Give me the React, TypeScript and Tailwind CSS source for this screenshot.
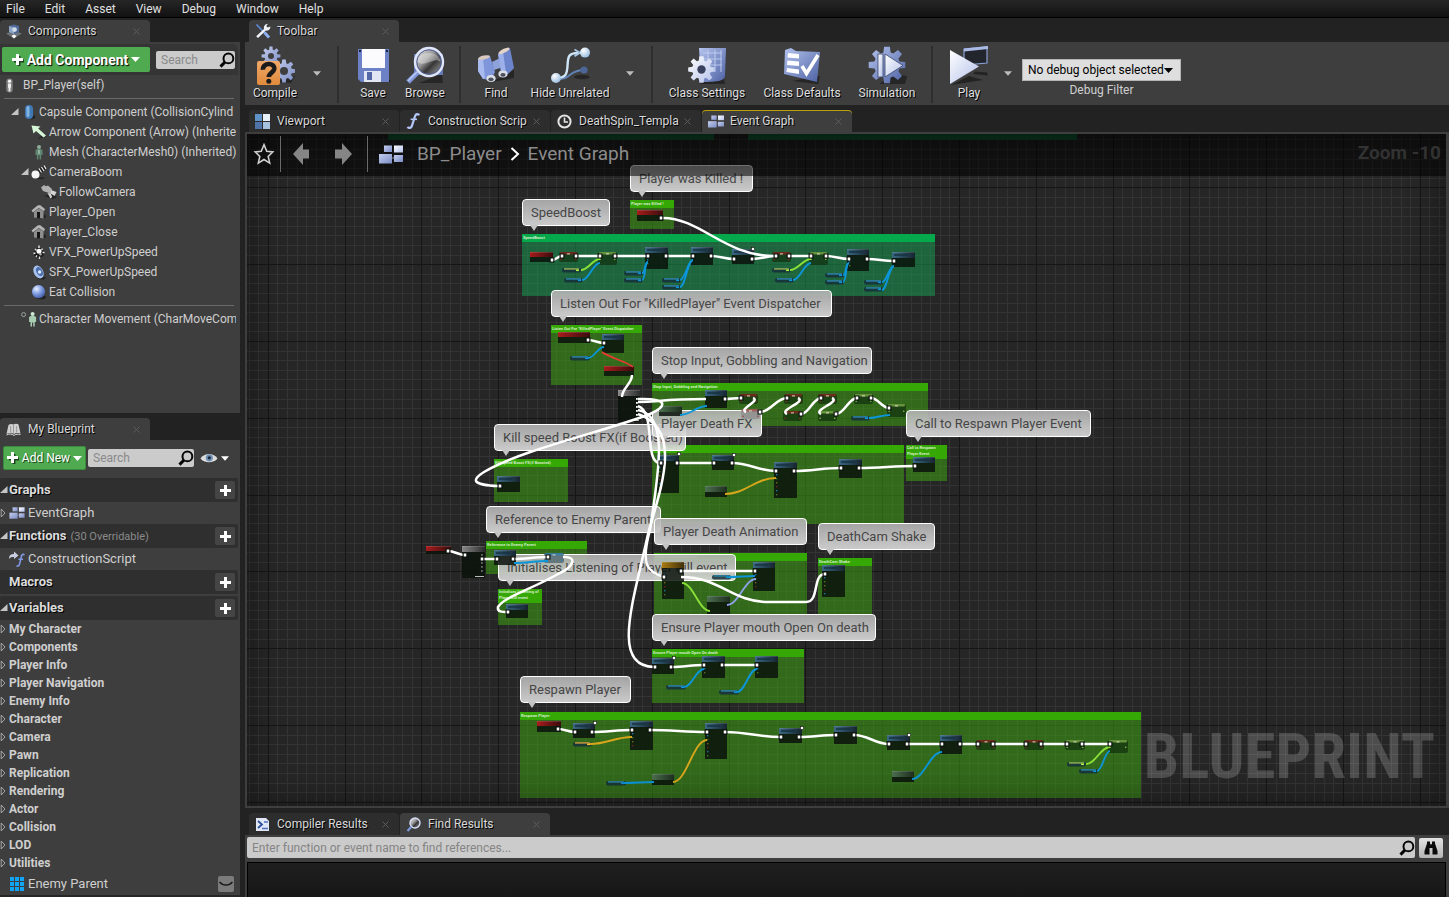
import React from "react";

/* ---------- shared shapes ---------- */

function gearPath(cx: number, cy: number, rOuter: number, rInner: number, teeth: number) {
  const step = (Math.PI * 2) / teeth;
  const pts: string[] = [];
  for (let i = 0; i < teeth; i++) {
    const a = i * step - Math.PI / 2;
    const spots: [number, number][] = [
      [a - step * 0.36, rInner],
      [a - step * 0.2, rOuter],
      [a + step * 0.2, rOuter],
      [a + step * 0.36, rInner],
    ];
    spots.forEach(([ang, r]) => pts.push(`${(cx + Math.cos(ang) * r).toFixed(1)} ${(cy + Math.sin(ang) * r).toFixed(1)}`));
  }
  return `M${pts.join("L")}Z`;
}

function Gradients() {
  return (
    <svg width="0" height="0" className="absolute" aria-hidden="true">
      <defs>
        <linearGradient id="steel" x1="0" y1="0" x2="1" y2="1">
          <stop offset="0" stopColor="#b4c3ee" />
          <stop offset="1" stopColor="#4d62a4" />
        </linearGradient>
        <linearGradient id="cog" x1="0" y1="0" x2="1" y2="1">
          <stop offset="0" stopColor="#c3cdef" />
          <stop offset="1" stopColor="#7d8dc4" />
        </linearGradient>
        <linearGradient id="pale" x1="0" y1="0" x2="1" y2="1">
          <stop offset="0" stopColor="#ffffff" />
          <stop offset="1" stopColor="#b3c0ea" />
        </linearGradient>
        <linearGradient id="orange" x1="0" y1="0" x2="0" y2="1">
          <stop offset="0" stopColor="#f0a868" />
          <stop offset="1" stopColor="#e08a3c" />
        </linearGradient>
        <linearGradient id="lens" x1="0" y1="0" x2="1" y2="1">
          <stop offset="0" stopColor="#f4f4f4" />
          <stop offset="0.4" stopColor="#9a9a9a" />
          <stop offset="0.6" stopColor="#363636" />
          <stop offset="1" stopColor="#b8b8b8" />
        </linearGradient>
        <radialGradient id="ball" cx="0.35" cy="0.3" r="0.8">
          <stop offset="0" stopColor="#e8f0ff" />
          <stop offset="0.5" stopColor="#7b98e0" />
          <stop offset="1" stopColor="#3b549e" />
        </radialGradient>
        <radialGradient id="whiteBall" cx="0.35" cy="0.3" r="0.8">
          <stop offset="0" stopColor="#ffffff" />
          <stop offset="1" stopColor="#8fb6dc" />
        </radialGradient>
      </defs>
    </svg>
  );
}

type IconProps = { className?: string };

const Svg = ({ box, className, children }: { box: string; className?: string; children: React.ReactNode }) => (
  <svg viewBox={box} className={className} aria-hidden="true">
    {children}
  </svg>
);

const Magnifier = ({ className }: IconProps) => (
  <Svg box="0 0 16 16" className={className}>
    <circle cx="9.4" cy="6.4" r="4.9" fill="none" stroke="#050505" strokeWidth="2" />
    <path d="M6 10L1.5 14.6" stroke="#050505" strokeWidth="3" />
  </Svg>
);

const Caret = ({ className }: IconProps) => (
  <Svg box="0 0 9 5" className={className}>
    <path d="M0 0H9L4.5 5Z" fill="currentColor" />
  </Svg>
);

const Plus = ({ className }: IconProps) => (
  <Svg box="0 0 12 12" className={className}>
    <path d="M2 7h10M7 2v10" stroke="#000" strokeWidth="3" opacity="0.6" />
    <path d="M0 5.5h11M5.5 0v11" stroke="#fff" strokeWidth="3" />
  </Svg>
);

const Open = () => (
  <Svg box="0 0 8 8" className="h-2 w-2">
    <path d="M7.5 0V7H0Z" fill="#c4c4c4" />
  </Svg>
);

const Closed = () => (
  <Svg box="0 0 6 10" className="h-2.5 w-1.5">
    <path d="M1.2 1L5 5L1.2 9Z" fill="none" stroke="#b0b0b0" strokeWidth="0.9" />
  </Svg>
);

/* ---------- small icons ---------- */

const GraphIcon = ({ className }: IconProps) => (
  <Svg box="0 0 24 19" className={className}>
    <path d="M12 4H8M12 13h4" stroke="#8890a8" strokeWidth="1" />
    <rect x="5" y="0.5" width="8" height="6.5" fill="url(#cog)" />
    <rect x="15" y="0.5" width="9" height="7" fill="url(#pale)" />
    <rect x="0" y="9" width="13" height="9.5" fill="url(#cog)" />
    <rect x="15" y="10" width="9" height="7" fill="url(#cog)" />
  </Svg>
);

const ViewportIcon = ({ className }: IconProps) => (
  <Svg box="0 0 15 15" className={className}>
    <rect x="0" y="0" width="7" height="7" fill="#5f93c8" />
    <rect x="8" y="0" width="7" height="7" fill="#e9f2f8" />
    <rect x="0" y="8" width="7" height="7" fill="#4f74a8" />
    <rect x="8" y="8" width="7" height="7" fill="#a5c3de" />
  </Svg>
);

const FunctionIcon = ({ className }: IconProps) => (
  <Svg box="0 0 14 16" className={className}>
    <path d="M13 2.3C12.4.6 9.8.6 9 3.2L6 12.6C5.3 15.2 3 15.6 1.4 14" fill="none" stroke="#b5c6f8" strokeWidth="2.2" />
    <path d="M4.6 6.3H11" stroke="#b5c6f8" strokeWidth="1.6" />
  </Svg>
);

const ConstructIcon = ({ className }: IconProps) => (
  <Svg box="0 0 16 16" className={className}>
    <path d="M0 8C0 4 2 3 5 3V.5L9.5 4.5L5 8V6C3 6 1.5 6 0 8Z" fill="#c8cde0" />
    <path d="M15.3 4.3C14.8 3 13 3 12.5 5L10.6 12.8C10.2 15 8.6 15.6 7.6 14.6M9.4 8.3H14" fill="none" stroke="#7f97e4" strokeWidth="1.6" />
  </Svg>
);

const ClockIcon = ({ className }: IconProps) => (
  <Svg box="0 0 15 15" className={className}>
    <circle cx="7.5" cy="7.5" r="6.1" fill="none" stroke="#e4e4e4" strokeWidth="2" />
    <path d="M7.5 3.6V8H11" fill="none" stroke="#e4e4e4" strokeWidth="1.6" />
  </Svg>
);

const ToolsIcon = ({ className }: IconProps) => (
  <Svg box="0 0 16 16" className={className}>
    <path d="M1.5 1.5L14 14.5" stroke="#5d86d8" strokeWidth="1.8" />
    <path d="M9.5 9.5L14 14.5" stroke="#8fb0f0" strokeWidth="3" />
    <path d="M1.2 13.2L9 6C8.4 3.4 10 1 13 .8L11.3 3L12.6 4.6L15.4 3.6C15.6 6.2 13.4 8.2 10.8 7.6L3 15Z" fill="#f2f4fa" />
  </Svg>
);

const ComponentsIcon = ({ className }: IconProps) => (
  <Svg box="0 0 16 15" className={className}>
    <path d="M0 9.5L8 6.5L16 9.5L8 14.5Z" fill="#6d7178" />
    <path d="M3 2L8 .5L13 2V8L8 10L3 8Z" fill="#4f6a98" />
    <path d="M3 2L8 3.5V10L3 8Z" fill="#8fa5c8" />
    <circle cx="8.6" cy="5.6" r="2.3" fill="#d3dcea" />
    <path d="M5.5 12L8 10.5L10.5 12L8 14.5Z" fill="#fff" />
  </Svg>
);

const BlueprintTabIcon = ({ className }: IconProps) => (
  <Svg box="0 0 15 13" className={className}>
    <path d="M2.5 2C4 .8 6 .8 7.5 1.6C9 .6 11 .6 12.500 1.6L14.5 10.5C12 9.8 9.500 9.8 8 11C6 9.8 3 9.8.5 11Z" fill="#cfcfcf" />
    <path d="M7.5 2V10.5M4.600 3v6.500M10.600 3v6.500" stroke="#8b8b8b" strokeWidth="0.8" />
    <path d="M.5 12C3 10.500 6 11 8 12.400C10 11 12 11 14.5 11.500" stroke="#fff" fill="none" strokeWidth="0.8" />
  </Svg>
);

const ResultsIcon = ({ className }: IconProps) => (
  <Svg box="0 0 15 15" className={className}>
    <path d="M1 1H11L14 4V14H1Z" fill="#dfe6f5" />
    <path d="M3 4l4 3.5L3 11" fill="none" stroke="#2a4f98" strokeWidth="1.8" />
    <path d="M7 11.5h6M9 5h4" stroke="#4d71ba" strokeWidth="1.6" />
  </Svg>
);

const FindIcon = ({ className }: IconProps) => (
  <Svg box="0 0 15 15" className={className}>
    <circle cx="9" cy="6" r="5" fill="url(#lens)" stroke="#d5def5" strokeWidth="1.4" />
    <path d="M5.4 9.8L1.5 14" stroke="#7d99dc" strokeWidth="2.2" />
  </Svg>
);

const EyeIcon = ({ className }: IconProps) => (
  <Svg box="0 0 18 12" className={className}>
    <path d="M.5 6.5C4 .5 14 .5 17.5 6.5C14 11.5 4 11.5 .5 6.5Z" fill="#dcdcdc" />
    <circle cx="9.3" cy="5.8" r="3.6" fill="#6f8fb4" />
    <circle cx="9.3" cy="5.8" r="1.6" fill="#1c2a3c" />
  </Svg>
);

const figure = "M6.3 5h3.4l1.8 1v5h-1.4v4.5H8.6V11.5H7.4v4H5.9V11H4.5V6Z";

const treeIcons: Record<string, React.ReactNode> = {
  actor: (
    <g>
      <rect x="4.5" y="0.5" width="7" height="15" rx="3.5" fill="#7c7c7c" />
      <circle cx="8" cy="3.4" r="1.8" fill="#f2f2f2" />
      <path d="M6.400 5.800H9.600V10.500H9V14.500H7V10.500H6.400Z" fill="#ededed" />
    </g>
  ),
  capsule: (
    <g>
      <path d="M9 14l5-3v3l-4 1.6Z" fill="#222" />
      <rect x="4" y="1" width="8" height="14" rx="4" fill="#4078b4" />
      <rect x="5.5" y="2" width="3" height="11" rx="1.5" fill="#7fb4e2" />
    </g>
  ),
  arrow: (
    <g>
      <path d="M6 15l9-2-2-3Z" fill="#242424" />
      <path d="M0.500 1.5L9.500 2.400L7.200 4.600L15 11.400L12.600 13.600L5 6.900L2.500 9.600Z" fill="#d6f6d8" />
    </g>
  ),
  mesh: (
    <g>
      <circle cx="8" cy="3" r="2" fill="#8fae9b" />
      <path d={figure} fill="#5f8570" />
      <path d="M7.5 6h1v4h-1z" fill="#c6dccb" />
    </g>
  ),
  boom: (
    <g>
      <path d="M7.500 8.500L13.500 3.500" stroke="#1c1c1c" strokeWidth="4" />
      <path d="M8 4.500l2.500 4M10.500 3l2.500 4M13 1.500l2 3.500" stroke="#ececec" strokeWidth="1.2" />
      <circle cx="4.500" cy="10.5" r="4" fill="#f6f6f6" />
      <path d="M5 15h7l2-1.5H9Z" fill="#222" />
    </g>
  ),
  camera: (
    <g>
      <path d="M3 12l9 3 4-2-5-3Z" fill="#242424" />
      <path d="M0 3.500L3 1L5 2.200L7 1.500L11 5L9.500 9.500L2 7Z" fill="#b0b0b0" />
      <path d="M10 6L15.500 8L13.500 12L9.500 9.500ZM6.500 9L9.500 14.500L11.200 13L9.600 9.500Z" fill="#d4d4d4" />
    </g>
  ),
  house: (
    <g>
      <path d="M8 15l7-1.5-1-3.5Z" fill="#202020" />
      <path d="M0.500 6.600L6.500 1.400L9 1L14 5L13 7.300L7.600 4L2 8.600Z" fill="#b4b4b4" />
      <path d="M3 8L7.5 4.600L12.500 7V14.500L3 13.600Z" fill="#8d8d8d" />
      <path d="M6 8H9V14.200H6Z" fill="#161616" />
    </g>
  ),
  spark: (
    <g>
      <circle cx="8" cy="9" r="5" fill="#191919" />
      <path d="M8 1.500v2.500M2.500 9.500l2-.5M8.500 12.500v2.500M11.500 8.500h2M4 5l1.600 1.600M11.600 4.600L10.500 6M5 13l1-1.600" stroke="#e4e4e4" strokeWidth="1.4" />
      <circle cx="8" cy="7.200" r="2.500" fill="#fff" />
      <circle cx="9.500" cy="10.200" r="1.200" fill="#a8a8a8" />
    </g>
  ),
  speaker: (
    <g>
      <path d="M6 13l9 0-2 2.4H8Z" fill="#222" />
      <ellipse cx="7.500" cy="8" rx="4.6" ry="6.8" fill="#a9c4f0" transform="rotate(-28 7.5 8)" />
      <ellipse cx="8.500" cy="7.6" rx="3" ry="4.8" fill="#4d6fb0" transform="rotate(-28 8.5 7.6)" />
      <circle cx="8.600" cy="8" r="1.7" fill="#dceaff" />
    </g>
  ),
  sphere: (
    <g>
      <ellipse cx="10" cy="13.4" rx="5" ry="1.8" fill="#222" />
      <circle cx="7.500" cy="7.6" r="6.6" fill="url(#ball)" />
    </g>
  ),
  movement: (
    <g>
      <circle cx="2.6" cy="3.6" r="2" fill="none" stroke="#9aa89c" strokeWidth="1" />
      <circle cx="11.6" cy="3" r="2" fill="#cfe8d4" />
      <path d={figure} fill="#a9cdb2" transform="translate(3.6 0)" />
    </g>
  ),
};

/* ---------- toolbar icons ---------- */

const CompileIcon = () => (
  <Svg box="0 0 40 40" className="h-10 w-10">
    <path d="M20 36L36 37L40 30Z" fill="#262626" />
    <path d={gearPath(16, 10, 9.5, 6.6, 8)} fill="url(#cog)" />
    <circle cx="16" cy="10" r="3" fill="#3e3e3e" />
    <path d={gearPath(29, 25, 11.5, 8, 8)} fill="url(#cog)" />
    <circle cx="29" cy="25" r="4" fill="#3e3e3e" />
    <rect x="2" y="15" width="23" height="24" rx="2" fill="url(#orange)" />
    <path d="M8 23.800C7.400 16.200 20.200 16.200 19.200 23.200C18.600 26.800 14 26.600 13.800 31" fill="none" stroke="#1b1b1b" strokeWidth="4.600" />
    <circle cx="13.8" cy="35.200" r="2.5" fill="#1b1b1b" />
  </Svg>
);

const SaveIcon = () => (
  <Svg box="0 0 40 40" className="h-10 w-10">
    <path d="M8 36L38 36L34 30Z" fill="#262626" />
    <path d="M5 3H36V36H8L5 33Z" fill="#6d82c6" />
    <rect x="9" y="3" width="23" height="19" fill="#fbfbfd" />
    <rect x="11" y="25" width="17" height="11" fill="#e3e7f4" />
    <rect x="14" y="26" width="5" height="8" fill="#5468a8" />
    <path d="M6 5h2M33 5h2" stroke="#1c2340" strokeWidth="2" />
  </Svg>
);

const BrowseIcon = () => (
  <Svg box="0 0 40 40" className="h-10 w-10">
    <path d="M14 37L38 37L37 28Z" fill="#262626" />
    <path d="M9 8H38V29H9Z" fill="#6478b8" />
    <path d="M13 26L3 36" stroke="#7f95d8" strokeWidth="5" />
    <path d="M12 26L3 35" stroke="#b9c8f5" strokeWidth="1.6" />
    <circle cx="24" cy="16" r="14" fill="url(#lens)" stroke="#dfe6fa" strokeWidth="2.4" />
    <circle cx="24" cy="16" r="12.2" fill="none" stroke="#4f5f94" strokeWidth="1" />
    <path d="M12.500 16C13 4 35 4 35.500 16C30 10 20 22 12.500 16Z" fill="#fff" opacity="0.35" />
  </Svg>
);

const BinocularIcon = () => (
  <Svg box="0 0 40 40" className="h-10 w-10">
    <path d="M16 36L38 32L38 24Z" fill="#262626" />
    <path d="M2 13L14 10L19 26L15 34L7 33L2 25Z" fill="#7f96da" />
    <path d="M2 13L7 12L9 32L7 33L2 25Z" fill="#a9baee" />
    <path d="M22 8L34 2L38 22L32 28L25 26Z" fill="#6c84cc" />
    <path d="M22 8L27 5.500L30 27L25 26Z" fill="#9db0ea" />
    <path d="M16 16L24 12V22L18 24Z" fill="#8ea2dc" />
    <ellipse cx="8" cy="11.500" rx="6" ry="2" fill="#d8c8c0" transform="rotate(-12 8 11.500)" />
    <ellipse cx="28" cy="4.800" rx="6" ry="2" fill="#e4d4c8" transform="rotate(-26 28 4.8)" />
    <ellipse cx="15" cy="32.500" rx="4.600" ry="3.400" fill="#dadde6" />
    <ellipse cx="15" cy="33.300" rx="2.6" ry="1.900" fill="#4b4f5c" />
    <ellipse cx="27" cy="28" rx="4.600" ry="3.400" fill="#dadde6" />
    <ellipse cx="27" cy="28.800" rx="2.6" ry="1.900" fill="#4b4f5c" />
  </Svg>
);

const HideIcon = () => (
  <Svg box="0 0 40 40" className="h-10 w-10">
    <ellipse cx="32" cy="31" rx="8" ry="2.2" fill="#262626" />
    <path d="M6 33C22 34 18 24 34 24" fill="none" stroke="#5f82b4" strokeWidth="2" />
    <circle cx="34" cy="24" r="3.6" fill="#4c6698" />
    <path d="M6 32C16 32 17 28 17.500 20C18 11 18 7 28 7" fill="none" stroke="#cfe6f8" strokeWidth="2.400" />
    <path d="M24.500 3.400L30 6.800L24.500 10.200" fill="none" stroke="#a9c9e8" strokeWidth="1.800" />
    <circle cx="35" cy="6.6" r="5" fill="url(#whiteBall)" />
    <circle cx="6" cy="32" r="5" fill="url(#whiteBall)" />
  </Svg>
);

const SettingsIcon = () => (
  <Svg box="0 0 40 40" className="h-10 w-10">
    <path d="M12 38L38 38L36 28Z" fill="#262626" />
    <path d="M12 2L39 2L38 29C38 35 32 36 14 36Z" fill="url(#steel)" />
    <path d="M16 7H35M16 13H35M16 19H35M21 4V26M28 4V26M34 4V26" stroke="#c9d5f6" strokeWidth="1.1" opacity="0.8" />
    <path d={gearPath(14.500, 23.500, 13.5, 9.500, 8)} fill="url(#pale)" />
    <circle cx="14.500" cy="23.500" r="4.2" fill="#39415e" />
  </Svg>
);

const DefaultsIcon = () => (
  <Svg box="0 0 40 40" className="h-10 w-10">
    <path d="M10 35L36 38L38 30Z" fill="#262626" />
    <path d="M3 4L9 2L14 5L38 6L35 36L2 28Z" fill="url(#steel)" />
    <path d="M6 7L17 8V12.5L5.4 11.5ZM5.4 14.5L17 15.5V20L5 19ZM5 22L17 23.5V28L4.4 26Z" fill="#fdfdff" />
    <path d="M20 20L24.500 27.500L36 9" fill="none" stroke="#fff" strokeWidth="3.6" />
  </Svg>
);

const SimulationIcon = () => (
  <Svg box="0 0 40 40" className="h-10 w-10">
    <path d="M12 38L38 38L40 30L28 28Z" fill="#262626" />
    <path d={gearPath(20, 19, 18.500, 13, 8)} fill="url(#steel)" />
    <rect x="11" y="8" width="5" height="23" fill="url(#pale)" stroke="#3a4568" strokeWidth="0.8" />
    <path d="M18 8L36 19.5L18 31Z" fill="url(#pale)" stroke="#3a4568" strokeWidth="0.8" />
  </Svg>
);

const PlayIcon = () => (
  <Svg box="0 0 40 40" className="h-10 w-10">
    <path d="M2 39L34 34L20 30ZM24 28L39 29.500L38 26.500L26 25.500Z" fill="#232323" />
    <path d="M15 3L38 1V17L15 19Z" fill="#23252d" stroke="#8ba0d4" strokeWidth="1.2" />
    <path d="M15 2.5L39 0V3L15 5.500Z" fill="#a9bbe6" />
    <path d="M1 4L30 20.500L1 38Z" fill="url(#pale)" />
  </Svg>
);

/* ---------- tabs ---------- */

function Tab({ icon, label, active, accent }: { icon: React.ReactNode; label: string; active?: boolean; accent?: boolean }) {
  return (
    <div
      className={`flex h-[22px] w-[150px] items-center rounded-t-sm pr-2.5 pl-1.5 ${active ? "bg-[#3e3e3e]" : "bg-[#2d2d2d]"} ${accent ? "shadow-[inset_0_1px_0_#b8a010]" : ""}`}
    >
      <span className="flex w-[22px] shrink-0 items-center">{icon}</span>
      <button type="button" className="min-w-0 flex-1 text-left whitespace-nowrap text-[#d8d8d8] [text-shadow:1px_1px_0_#000]">
        {label}
      </button>
      <button type="button" aria-label={`Close ${label}`} className="shrink-0">
        <Svg box="0 0 7 7" className="h-[7px] w-[7px]">
          <path d="M0.5 0.5L6.5 6.5M6.5 0.5L0.5 6.5" stroke="#5c5c5c" strokeWidth="1" />
        </Svg>
      </button>
    </div>
  );
}

/* ---------- left column ---------- */

const components: { icon: string; label: string; indent: string; open?: boolean }[] = [
  { icon: "capsule", label: "Capsule Component (CollisionCylind", indent: "pl-[11px]", open: true },
  { icon: "arrow", label: "Arrow Component (Arrow) (Inherite", indent: "pl-[21px]" },
  { icon: "mesh", label: "Mesh (CharacterMesh0) (Inherited)", indent: "pl-[21px]" },
  { icon: "boom", label: "CameraBoom", indent: "pl-[21px]", open: true },
  { icon: "camera", label: "FollowCamera", indent: "pl-[31px]" },
  { icon: "house", label: "Player_Open", indent: "pl-[21px]" },
  { icon: "house", label: "Player_Close", indent: "pl-[21px]" },
  { icon: "spark", label: "VFX_PowerUpSpeed", indent: "pl-[21px]" },
  { icon: "speaker", label: "SFX_PowerUpSpeed", indent: "pl-[21px]" },
  { icon: "sphere", label: "Eat Collision", indent: "pl-[21px]" },
];

function TreeRow({ icon, label, indent, open }: { icon: string; label: string; indent: string; open?: boolean }) {
  return (
    <li className={`flex h-5 items-center overflow-hidden whitespace-nowrap ${indent}`}>
      <span className="w-2.5 shrink-0">{open && <Open />}</span>
      <Svg box="0 0 16 16" className="mr-0.5 h-4 w-4 shrink-0">
        {treeIcons[icon]}
      </Svg>
      <span>{label}</span>
    </li>
  );
}

function SearchBox({ id, className }: { id: string; className: string }) {
  return (
    <div className={`flex h-[18px] items-center rounded-xs bg-[#cbcbcb] ${className}`}>
      <input
        id={id}
        aria-label="Search"
        placeholder="Search"
        className="w-full min-w-0 flex-1 bg-transparent pl-[5px] outline-none placeholder:text-[#8a8a8a]"
      />
      <Magnifier className="h-4 w-4 shrink-0" />
    </div>
  );
}

function ComponentsPanel() {
  return (
    <section>
      <div className="flex pt-0.5">
        <Tab icon={<ComponentsIcon className="h-[15px] w-4" />} label="Components" active />
      </div>
      <div className="h-[371px] bg-[#3e3e3e] pt-0.5 pr-0.5">
        <div className="flex h-[31px] items-center gap-1.5 rounded-tr-md bg-[#353535] pl-0.5">
          <button
            type="button"
            className="flex h-[25px] w-[148px] items-center justify-center gap-[3px] rounded-xs bg-[#4faa50] text-[14px] font-bold text-white [text-shadow:1px_1px_1px_#000]"
          >
            <Plus className="h-3 w-3" />
            <span className="whitespace-nowrap">Add Component</span>
            <Caret className="h-[5px] w-[9px]" />
          </button>
          <SearchBox id="component-search" className="w-[79px]" />
        </div>
        <div className="flex h-5 items-center gap-1.5 pl-0.5">
          <Svg box="0 0 16 16" className="h-[15px] w-[15px]">
            {treeIcons.actor}
          </Svg>
          <span>BP_Player(self)</span>
        </div>
        <hr className="mx-1 mt-[3px] mb-[3px] border-[#6a6a6a]" />
        <ul className="pr-px">
          {components.map((c) => (
            <TreeRow key={c.label} {...c} />
          ))}
        </ul>
        <hr className="mx-1 mt-[3px] mb-[3px] border-[#6a6a6a]" />
        <ul className="pr-0.5">
          <TreeRow icon="movement" label="Character Movement (CharMoveCom" indent="pl-[11px]" />
        </ul>
      </div>
    </section>
  );
}

function Category({ label, note, open = true, gap }: { label: string; note?: string; open?: boolean; gap?: boolean }) {
  return (
    <div className={`flex h-6 items-center rounded-xs bg-[#2f2f2f] pr-[3px] ${gap ? "mt-0.5" : ""}`}>
      <span className="w-[9px] shrink-0">{open && <Open />}</span>
      <h2 className="text-[13px] font-bold text-[#dcdcdc] [text-shadow:1px_1px_0_#000]">{label}</h2>
      {note && <span className="pt-0.5 pl-1 text-[11px] text-[#8a8a8a]">{note}</span>}
      <button type="button" aria-label={`Add to ${label}`} className="ml-auto flex h-[18px] w-5 items-center justify-center rounded-xs bg-[#454545]">
        <Svg box="0 0 11 11" className="h-[11px] w-[11px]">
          <path d="M0 5.5h11M5.5 0v11" stroke="#fff" strokeWidth="3" />
        </Svg>
      </button>
    </div>
  );
}

const variableGroups = [
  "My Character",
  "Components",
  "Player Info",
  "Player Navigation",
  "Enemy Info",
  "Character",
  "Camera",
  "Pawn",
  "Replication",
  "Rendering",
  "Actor",
  "Collision",
  "LOD",
  "Utilities",
];

function BlueprintPanel() {
  return (
    <section className="flex flex-1 flex-col">
      <div className="flex pt-[5px]">
        <Tab icon={<BlueprintTabIcon className="h-[13px] w-[15px]" />} label="My Blueprint" active />
      </div>
      <div className="flex-1 bg-[#3e3e3e] pr-0.5">
        <div className="flex h-[38px] items-center gap-0.5 pb-0.5 pl-[3px]">
          <button
            type="button"
            className="flex h-6 w-[83px] items-center justify-center gap-[3px] rounded-xs border border-[#3a8c3c] bg-[#4faa50] text-white [text-shadow:1px_1px_0_#1e4a1e]"
          >
            <Plus className="h-3 w-3" />
            <span className="whitespace-nowrap">Add New</span>
            <Caret className="h-[5px] w-[9px]" />
          </button>
          <SearchBox id="blueprint-search" className="w-[106px]" />
          <button type="button" aria-label="View options" className="ml-1 flex items-center gap-[3px] text-white">
            <EyeIcon className="h-3 w-[18px]" />
            <Caret className="h-[5px] w-2" />
          </button>
        </div>
        <Category label="Graphs" />
        <div className="flex h-[22px] items-center text-[13px]">
          <span className="w-[9px]">
            <Closed />
          </span>
          <GraphIcon className="mr-[3px] h-3 w-4" />
          EventGraph
        </div>
        <Category label="Functions" note="(30 Overridable)" />
        <div className="flex h-[22px] items-center pl-[9px] text-[13px]">
          <ConstructIcon className="mr-[3px] h-4 w-4" />
          ConstructionScript
        </div>
        <Category label="Macros" open={false} />
        <Category label="Variables" gap />
        <ul>
          {variableGroups.map((g) => (
            <li key={g} className="flex h-[18px] items-center font-bold">
              <span className="w-[9px]">
                <Closed />
              </span>
              {g}
            </li>
          ))}
        </ul>
        <div className="flex h-[23px] items-center pr-1 pl-2.5 text-[13px]">
          <Svg box="0 0 14 14" className="mr-1 h-3.5 w-3.5">
            <path d="M0 0h4v4H0zM5 0h4v4H5zM10 0h4v4h-4zM0 5h4v4H0zM5 5h4v4H5zM10 5h4v4h-4zM0 10h4v4H0zM5 10h4v4H5zM10 10h4v4h-4z" fill="#10a5f5" />
          </Svg>
          Enemy Parent
          <button type="button" aria-label="Toggle visibility" className="ml-auto flex h-4 w-4 items-center justify-center rounded-xs bg-[#7b7b7b]">
            <Svg box="0 0 14 8" className="h-2 w-3.5">
              <path d="M.5 2C4 6 10 6 13.5 2" fill="none" stroke="#1a1a1a" strokeWidth="1.5" />
            </Svg>
          </button>
        </div>
      </div>
      <div className="h-0.5 bg-[#262626]" />
    </section>
  );
}

/* ---------- toolbar ---------- */

function Tool({ icon, label, width }: { icon: React.ReactNode; label: string; width: string }) {
  return (
    <button type="button" className={`flex shrink-0 flex-col items-center ${width}`}>
      {icon}
      <span className="leading-[14px] whitespace-nowrap text-[#dedede] [text-shadow:1px_1px_0_#000]">{label}</span>
    </button>
  );
}

const ToolMenu = ({ label, width }: { label: string; width: string }) => (
  <button type="button" aria-label={label} className={`flex shrink-0 items-center justify-center pb-1 text-[#bdbdbd] ${width}`}>
    <Caret className="h-[5px] w-2" />
  </button>
);

const Divider = () => <span className="mx-2 mb-0.5 w-0.5 shrink-0 bg-[#2e2e2e]" />;

function Toolbar() {
  return (
    <section>
      <div className="flex pt-0.5 pl-1">
        <Tab icon={<ToolsIcon className="h-4 w-4" />} label="Toolbar" active />
      </div>
      <div className="flex h-[63px] bg-[#3e3e3e] pt-1">
        <Tool icon={<CompileIcon />} label="Compile" width="w-[60px]" />
        <ToolMenu label="Compile options" width="w-6" />
        <Divider />
        <Tool icon={<SaveIcon />} label="Save" width="w-[52px]" />
        <Tool icon={<BrowseIcon />} label="Browse" width="w-[52px]" />
        <Divider />
        <Tool icon={<BinocularIcon />} label="Find" width="w-[54px]" />
        <Tool icon={<HideIcon />} label="Hide Unrelated" width="w-[94px]" />
        <ToolMenu label="Hide options" width="w-[26px]" />
        <Divider />
        <Tool icon={<SettingsIcon />} label="Class Settings" width="w-[92px]" />
        <Tool icon={<DefaultsIcon />} label="Class Defaults" width="w-[98px]" />
        <Tool icon={<SimulationIcon />} label="Simulation" width="w-[72px]" />
        <Divider />
        <Tool icon={<PlayIcon />} label="Play" width="w-[56px]" />
        <ToolMenu label="Play options" width="w-[22px]" />
        <div className="ml-[3px] flex flex-col items-center pt-[13px]">
          <div className="grid items-center">
            <select
              id="debug-filter"
              className="col-start-1 row-start-1 h-[22px] w-[159px] appearance-none border border-[#b5b5b5] bg-[#dedede] pl-[5px] text-black outline-none"
            >
              <option>No debug object selected</option>
            </select>
            <Caret className="pointer-events-none col-start-1 row-start-1 mr-2 h-[5px] w-[9px] justify-self-end text-black" />
          </div>
          <label htmlFor="debug-filter" className="pt-0.5 leading-[14px]">
            Debug Filter
          </label>
        </div>
      </div>
    </section>
  );
}

/* ---------- graph ---------- */

/* Graph space starts at this point; the canvas shows it one unit to a pixel. */
const ORIGIN = { x: 247, y: 134 };
const VIEW = { w: 2400, h: 1400 };

type Comment = { x: number; y: number; w: number; h: number; title: string; bubble: [number, number, number]; teal?: boolean; tall?: boolean };

const comments: Comment[] = [
  { x: 630, y: 200, w: 44, h: 29, title: "Player was Killed !", bubble: [630, 165, 123] },
  { x: 522, y: 234, w: 413, h: 62, title: "SpeedBoost", bubble: [522, 199, 88], teal: true },
  { x: 551, y: 325, w: 91, h: 60, title: 'Listen Out For "KilledPlayer" Event Dispatcher', bubble: [551, 290, 281] },
  { x: 494, y: 459, w: 74, h: 43, title: "Kill speed Boost FX(if Boosted)", bubble: [494, 424, 192] },
  { x: 652, y: 383, w: 276, h: 43, title: "Stop Input, Gobbling and Navigation", bubble: [652, 347, 220] },
  { x: 652, y: 445, w: 252, h: 79, title: "Player Death FX", bubble: [652, 410, 110] },
  { x: 906, y: 445, w: 41, h: 36, title: "Call to Respawn Player Event", bubble: [906, 410, 185], tall: true },
  { x: 498, y: 589, w: 44, h: 36, title: "Initialises Listening of Player Kill event", bubble: [498, 554, 238], tall: true },
  { x: 486, y: 541, w: 101, h: 33, title: "Reference to Enemy Parent", bubble: [486, 506, 175] },
  { x: 654, y: 553, w: 153, h: 62, title: "Player Death Animation", bubble: [654, 518, 153] },
  { x: 818, y: 558, w: 54, h: 56, title: "DeathCam Shake", bubble: [818, 523, 117] },
  { x: 652, y: 649, w: 152, h: 54, title: "Ensure Player mouth Open On death", bubble: [652, 614, 224] },
  { x: 520, y: 712, w: 621, h: 86, title: "Respawn Player", bubble: [520, 676, 111] },
];

type Kind = "event" | "call" | "macro" | "pure" | "cast" | "setRed" | "setGreen" | "setGrey" | "setBlue" | "getBlue" | "getGreen" | "getGold";
type GraphNode = [Kind, number, number, number, number];

const nodes: GraphNode[] = [
  ["event", 637, 210, 26, 11],
  ["event", 530, 252, 23, 10],
  ["setRed", 559, 252, 19, 10],
  ["setGreen", 598, 252, 19, 13],
  ["getGreen", 562, 268, 19, 5],
  ["getBlue", 564, 278, 19, 5],
  ["call", 645, 247, 23, 22],
  ["getBlue", 624, 271, 19, 5],
  ["getBlue", 624, 278, 19, 5],
  ["call", 691, 247, 22, 18],
  ["getBlue", 662, 278, 19, 5],
  ["getBlue", 662, 285, 19, 5],
  ["call", 732, 249, 22, 15],
  ["setRed", 772, 252, 19, 10],
  ["setGreen", 809, 252, 19, 13],
  ["getGreen", 772, 268, 19, 5],
  ["getBlue", 775, 278, 19, 5],
  ["call", 847, 249, 22, 22],
  ["getBlue", 825, 273, 19, 5],
  ["getBlue", 825, 280, 19, 5],
  ["call", 892, 252, 23, 15],
  ["getBlue", 864, 280, 19, 5],
  ["getBlue", 864, 287, 19, 5],
  ["event", 558, 332, 32, 11],
  ["call", 602, 334, 22, 19],
  ["getBlue", 570, 356, 20, 5],
  ["event", 604, 366, 30, 10],
  ["macro", 618, 390, 22, 32],
  ["pure", 659, 406, 23, 10],
  ["call", 705, 390, 22, 18],
  ["setRed", 739, 394, 19, 10],
  ["setGrey", 741, 409, 19, 10],
  ["setRed", 784, 394, 19, 10],
  ["setRed", 783, 411, 19, 10],
  ["setRed", 818, 394, 19, 10],
  ["setGreen", 818, 411, 19, 10],
  ["setGreen", 854, 394, 19, 10],
  ["setGreen", 887, 404, 19, 13],
  ["getBlue", 851, 416, 19, 5],
  ["call", 497, 476, 23, 16],
  ["event", 426, 546, 25, 8],
  ["macro", 462, 546, 23, 32],
  ["call", 494, 550, 22, 15],
  ["setBlue", 544, 553, 20, 10],
  ["call", 506, 604, 22, 14],
  ["call", 657, 455, 22, 38],
  ["call", 712, 455, 22, 15],
  ["call", 774, 462, 23, 36],
  ["call", 839, 459, 23, 19],
  ["call", 913, 457, 22, 15],
  ["pure", 705, 486, 22, 11],
  ["cast", 662, 562, 22, 37],
  ["call", 753, 562, 22, 29],
  ["getBlue", 712, 575, 19, 5],
  ["pure", 707, 596, 23, 18],
  ["call", 822, 565, 23, 32],
  ["call", 652, 658, 22, 16],
  ["call", 702, 656, 23, 22],
  ["call", 755, 656, 23, 22],
  ["getBlue", 666, 685, 20, 5],
  ["getBlue", 719, 690, 20, 5],
  ["event", 537, 721, 24, 11],
  ["call", 573, 723, 22, 15],
  ["getGold", 573, 742, 19, 5],
  ["call", 630, 721, 23, 29],
  ["call", 705, 723, 22, 36],
  ["pure", 652, 774, 22, 11],
  ["getBlue", 606, 781, 20, 5],
  ["call", 779, 728, 23, 15],
  ["call", 834, 726, 23, 18],
  ["call", 887, 735, 23, 15],
  ["call", 940, 735, 22, 19],
  ["pure", 892, 771, 22, 11],
  ["setRed", 976, 740, 20, 10],
  ["setRed", 1024, 740, 20, 10],
  ["setGreen", 1065, 740, 20, 10],
  ["setGreen", 1108, 740, 20, 13],
  ["getGreen", 1067, 762, 19, 5],
  ["getBlue", 1079, 769, 19, 5],
];

const markers: [number, number][] = [
  [753, 249],
  [679, 454],
  [734, 455],
  [674, 658],
  [595, 723],
  [802, 728],
  [909, 735],
];

const WHITE = "#ffffff";
const BLUE = "#0c95d8";
const GREEN = "#8be038";
const GOLD = "#d8a61c";

/* start x, start y, end x, end y */
type Link = [number, number, number, number];

const execLinks: Link[] = [
  [552, 260, 562, 256],
  [576, 256, 600, 256],
  [615, 256, 648, 256],
  [666, 256, 693, 256],
  [711, 256, 734, 259],
  [752, 259, 776, 256],
  [789, 256, 811, 256],
  [826, 256, 849, 259],
  [867, 259, 894, 261],
  [588, 340, 604, 343],
  [725, 399, 741, 398],
  [760, 412, 787, 398],
  [801, 414, 821, 398],
  [836, 414, 857, 398],
  [871, 398, 889, 408],
  [448, 551, 465, 555],
  [482, 559, 497, 559],
  [513, 559, 548, 557],
  [677, 463, 714, 463],
  [732, 463, 776, 471],
  [794, 471, 841, 468],
  [859, 468, 915, 466],
  [681, 571, 755, 571],
  [671, 667, 704, 665],
  [722, 665, 757, 665],
  [558, 729, 575, 732],
  [592, 732, 632, 730],
  [650, 730, 707, 732],
  [725, 732, 781, 737],
  [799, 737, 836, 735],
  [854, 735, 889, 744],
  [907, 744, 942, 744],
  [960, 744, 978, 744],
  [993, 744, 1026, 744],
  [1041, 744, 1067, 744],
  [1082, 744, 1110, 744],
];

const dataLinks: [string, ...Link][] = [
  [GREEN, 581, 270, 600, 259],
  [BLUE, 582, 280, 600, 263],
  [BLUE, 642, 273, 648, 262],
  [BLUE, 642, 280, 648, 262],
  [BLUE, 680, 280, 693, 260],
  [BLUE, 680, 287, 693, 260],
  [GREEN, 790, 270, 811, 259],
  [BLUE, 793, 280, 811, 263],
  [BLUE, 843, 275, 849, 263],
  [BLUE, 843, 282, 849, 263],
  [BLUE, 882, 282, 894, 266],
  [BLUE, 882, 290, 894, 266],
  [BLUE, 588, 358, 604, 347],
  [BLUE, 680, 415, 707, 406],
  [BLUE, 869, 418, 890, 415],
  [BLUE, 514, 563, 548, 561],
  [GOLD, 725, 494, 776, 478],
  [BLUE, 729, 577, 755, 576],
  [GREEN, 682, 583, 710, 611],
  ["#8fa2e8", 727, 605, 756, 579],
  [BLUE, 684, 687, 704, 669],
  [BLUE, 737, 692, 757, 669],
  [GOLD, 590, 744, 632, 737],
  [GOLD, 673, 782, 707, 740],
  [BLUE, 624, 783, 654, 782],
  [BLUE, 912, 779, 942, 752],
  [GREEN, 1086, 764, 1110, 747],
  [BLUE, 1097, 771, 1110, 751],
];

/* Links that loop back or cross several comments. */
const longLinks = [
  "M663 218C700 218 725 256 774 256",
  "M632 375C632 384 622 388 622 397",
  "M753 398C761 401 738 409 746 412",
  "M798 398C807 402 778 410 787 414",
  "M832 398C841 402 812 410 821 414",
  "M638 402C660 402 660 399 706 399",
  "M638 399C668 398 668 406 650 414C610 430 520 450 484 472C470 481 474 485 498 486",
  "M638 406C656 412 644 460 659 463",
  "M638 410C670 416 658 474 650 530C640 566 648 572 664 577",
  "M638 414C684 430 660 490 648 534C634 600 610 666 654 667",
  "M563 557C578 556 574 567 558 574C530 590 504 597 498 607C497 612 502 612 508 612",
  "M681 577C720 577 732 602 768 602L806 602C820 602 812 574 825 574",
];

const loosePins: [number, number][] = [
  [661, 218],
  [500, 486],
  [508, 612],
  [661, 463],
  [655, 667],
  [825, 574],
  [664, 577],
];

function curve([x1, y1, x2, y2]: Link) {
  const d = Math.max(4, Math.abs(x2 - x1) * 0.4);
  return `M${x1} ${y1}C${x1 + d} ${y1} ${x2 - d} ${y2} ${x2} ${y2}`;
}

const Pin = ({ x, y }: { x: number; y: number }) => (
  <g>
    <rect x={x - 2.5} y={y - 2.5} width="5" height="5" fill="#0b100b" />
    <rect x={x - 1.3} y={y - 1.5} width="2.6" height="3" fill="#fff" />
  </g>
);

function NodeShape({ node: [kind, x, y, w, h] }: { node: GraphNode }) {
  if (kind.startsWith("get")) {
    const edge = kind === "getBlue" ? "#2b7896" : kind === "getGreen" ? "#7c9a50" : "#a88a3c";
    const dot = kind === "getBlue" ? BLUE : kind === "getGreen" ? "#a8f040" : "#f0c030";
    return (
      <g>
        <rect x={x} y={y} width={w} height={h - 0.6} rx="2" fill="#16303a" fillOpacity="0.85" />
        <rect x={x + 2} y={y} width={w - 4} height="1.8" fill={edge} />
        <rect x={x + w - 5} y={y + 1.5} width="3" height="1.6" fill={dot} />
      </g>
    );
  }
  if (kind.startsWith("set")) {
    const tint = { setRed: "#8a2420", setGreen: "#7fae4a", setGrey: "#a04a4a", setBlue: "#2f7fb0" }[kind as string];
    const body = kind === "setGrey" ? "#8b8b8b" : kind === "setBlue" ? "#46606c" : "#12300f";
    return (
      <g>
        <rect x={x} y={y} width={w} height={h} rx="2" fill={body} fillOpacity="0.72" />
        <rect x={x + 1} y={y} width={w - 2} height="2.4" rx="0.8" fill={tint} fillOpacity="0.75" />
        <rect x={x + w / 2 - 1.5} y={y + 1.4} width="3" height="1" fill="#e0d8c0" />
        <rect x={x + 1.5} y={y + 6.6} width="1.4" height="1.4" fill={tint} />
        <rect x={x + w - 3} y={y + 6.6} width="1.4" height="1.4" fill={tint} />
      </g>
    );
  }
  const head = { event: "url(#headRed)", call: "url(#headBlue)", macro: "url(#headGrey)", pure: "url(#headGreen)", cast: "url(#headGold)" }[kind as string];
  const headH = kind === "event" ? 5 : 6;
  return (
    <g>
      <rect x={x} y={y} width={w} height={h} fill="#0b130c" fillOpacity="0.85" />
      <rect x={x} y={y} width={w} height={headH} fill={head} />
      <rect x={x} y={y} width={w} height="0.8" fill="#fff" fillOpacity="0.18" />
      {kind === "call" && <rect x={x + 2} y={y + 2} width={w * 0.6} height="2" fill="#14303f" fillOpacity="0.7" />}
      {kind !== "macro" &&
        h > 20 &&
        Array.from({ length: Math.floor((h - 12) / 4) }, (_, i) => (
          <rect key={i} x={x + 2} y={y + 12 + i * 4} width="1.4" height="1.4" fill={["#1878a0", "#4c7428", "#746820", "#6c2222"][i % 4]} />
        ))}
      {kind === "macro" &&
        Array.from({ length: Math.floor((h - 12) / 4) }, (_, i) => (
          <rect key={`o${i}`} x={x + w - 4} y={y + 8 + i * 4} width="1.8" height="1.8" fill={x > 600 ? "#fff" : "#6a6a6a"} />
        ))}
      {kind === "macro" && <rect x={x + w - 10} y={y + h - 2} width="9" height="1" fill="#bbb" />}
    </g>
  );
}

function gridLines() {
  const lines = { minor: "", major: "" };
  for (let i = -25; i < 240; i++) {
    const key = i % 8 === 0 ? "major" : "minor";
    const gx = Math.round(421.4 + i * 9.6) + 0.5;
    const gy = Math.round(187.4 + i * 9.6) + 0.5;
    lines[key] += `M${gx} 0V${VIEW.h + 200}M0 ${gy}H${VIEW.w + 300}`;
  }
  return lines;
}

function Graph() {
  const lines = gridLines();
  const box = `${ORIGIN.x} ${ORIGIN.y} ${VIEW.w} ${VIEW.h}`;
  return (
    <div className="relative flex-1 overflow-hidden bg-[#262626]">
      <svg viewBox={box} width={VIEW.w} height={VIEW.h} className="absolute top-0 left-0 max-w-none" aria-hidden="true">
        <path d={lines.minor} stroke="#343434" strokeWidth="1" />
        <path d={lines.major} stroke="#161616" strokeWidth="1" />
        <rect x="388" y="134" width="326" height="6" fill="#14663a" />
        <rect x="748" y="134" width="329" height="6" fill="#14663a" />
      </svg>

      {comments.map((c) => (
        <div
          key={c.title}
          className={`absolute overflow-hidden ${c.teal ? "bg-[#18965090]" : "bg-[#3c9e1490]"}`}
          style={{ left: c.x - ORIGIN.x, top: c.y - ORIGIN.y, width: c.w, height: c.h }}
        >
          <div
            className={`overflow-hidden pl-px text-[4px] font-bold text-[#d2ecc8] ${c.teal ? "bg-[#05a84a]" : "bg-[#35a805]"} ${c.tall ? "h-3.5 leading-[6px]" : "h-2 leading-[7px] whitespace-nowrap"}`}
          >
            {c.title}
          </div>
        </div>
      ))}

      {comments.map((c) => (
        <div
          key={c.title}
          className="absolute flex h-[27px] items-center rounded-[4px] border border-white bg-linear-to-b from-[#b2b2b2e6] to-[#dcdcdce6] pl-2 text-[13px] whitespace-nowrap text-[#464646]"
          style={{ left: c.bubble[0] - ORIGIN.x, top: c.bubble[1] - ORIGIN.y, width: c.bubble[2] }}
        >
          {c.title}
          <Svg box="0 0 8 6" className="absolute top-full left-[7px] h-1.5 w-2">
            <path d="M0 0H8L4 6Z" fill="#c4c4c4" />
          </Svg>
        </div>
      ))}

      <svg viewBox={box} width={VIEW.w} height={VIEW.h} className="absolute top-0 left-0 max-w-none" aria-hidden="true">
        <defs>
          <linearGradient id="headRed" x1="0" x2="1">
            <stop offset="0" stopColor="#a81c1c" />
            <stop offset="1" stopColor="#3a0c0c" />
          </linearGradient>
          <linearGradient id="headBlue" x1="0" x2="1">
            <stop offset="0" stopColor="#3a6884" />
            <stop offset="1" stopColor="#16242e" />
          </linearGradient>
          <linearGradient id="headGrey" x1="0" x2="1">
            <stop offset="0" stopColor="#8a8a8a" />
            <stop offset="1" stopColor="#2c2c2c" />
          </linearGradient>
          <linearGradient id="headGreen" x1="0" x2="1">
            <stop offset="0" stopColor="#4d7050" />
            <stop offset="1" stopColor="#1e2e1e" />
          </linearGradient>
          <linearGradient id="headGold" x1="0" x2="1">
            <stop offset="0" stopColor="#a87a10" />
            <stop offset="1" stopColor="#40300c" />
          </linearGradient>
        </defs>
        {nodes.map((n) => (
          <NodeShape key={n.join("-")} node={n} />
        ))}
        <g fill="none">
          {dataLinks.map(([color, ...l]) => (
            <path key={l.join("-")} d={curve(l as Link)} stroke={color} strokeWidth="1.9" />
          ))}
          <path d="M602 352C610 358 628 362 633 367" stroke="#e83a30" strokeWidth="1.6" />
          {execLinks.map((l) => (
            <path key={l.join("-")} d={curve(l)} stroke={WHITE} strokeWidth="2.5" />
          ))}
          {longLinks.map((d) => (
            <path key={d} d={d} stroke={WHITE} strokeWidth="2.5" />
          ))}
        </g>
        {execLinks.map(([x1, y1, x2, y2]) => (
          <g key={`${x1}-${y1}-${x2}`}>
            <Pin x={x1} y={y1} />
            <Pin x={x2} y={y2} />
          </g>
        ))}
        {loosePins.map(([x, y]) => (
          <Pin key={`${x}-${y}`} x={x} y={y} />
        ))}
        {markers.map(([x, y]) => (
          <rect key={`${x}-${y}`} x={x - 1.5} y={y - 1.5} width="3" height="3" fill="#fff" stroke="#111" strokeWidth="0.6" />
        ))}
      </svg>

      <div className="pointer-events-none absolute inset-0 shadow-[inset_0_0_36px_rgba(0,0,0,0.45)]" />

      <div
        className="absolute right-[11px] bottom-[13px] text-[63px] leading-[72px] font-bold text-white/18"
        style={{ fontFamily: '"Roboto Condensed", "Liberation Sans Narrow", Roboto, sans-serif' }}
      >
        BLUEPRINT
      </div>

      <header className="absolute inset-x-0 top-0 flex h-[42px] items-center bg-black/55 pb-0.5 pl-1.5 text-[19px] text-[#8c8c8c]">
        <button type="button" aria-label="Favorite">
          <Svg box="0 0 20 20" className="h-[22px] w-[22px]">
            <path d="M10 1.5L12.500 7.600L18 8.100L13.800 12.200L15.200 18.300L10 15L4.800 18.300L6.200 12.200L2 8.100L7.500 7.600Z" fill="none" stroke="#d0d0d0" strokeWidth="1.400" />
          </Svg>
        </button>
        <span className="ml-[5px] h-9 w-px bg-[#6a6a6a]" />
        <button type="button" aria-label="Back" className="ml-3">
          <Svg box="0 0 17 22" className="h-[22px] w-[17px]">
            <path d="M0 11L10 0V6.500H16V15.500H10V22Z" fill="#858585" />
          </Svg>
        </button>
        <button type="button" aria-label="Forward" className="ml-[25px]">
          <Svg box="0 0 17 22" className="h-[22px] w-[17px]">
            <path d="M17 11L7 0V6.500H0V15.500H7V22Z" fill="#858585" />
          </Svg>
        </button>
        <span className="ml-[15px] h-9 w-px bg-[#6a6a6a]" />
        <GraphIcon className="ml-[11px] h-[19px] w-6" />
        <a href="#blueprint" className="ml-3.5">
          BP_Player
        </a>
        <Svg box="0 0 10 14" className="mx-2 h-3.5 w-2.5">
          <path d="M1.500 1L8 7L1.500 13" fill="none" stroke="#fff" strokeWidth="2" />
        </Svg>
        <a href="#event-graph">Event Graph</a>
        <span className="ml-auto pr-[5px] pb-0.5 font-bold text-[#323232]">Zoom -10</span>
      </header>
    </div>
  );
}

/* ---------- find results ---------- */

function FindPanel() {
  return (
    <section>
      <div className="flex gap-px pt-[5px] pl-1">
        <Tab icon={<ResultsIcon className="h-[15px] w-[15px]" />} label="Compiler Results" />
        <Tab icon={<FindIcon className="h-[15px] w-[15px]" />} label="Find Results" active />
      </div>
      <div className="bg-[#3e3e3e] pt-0.5 pr-[3px] pl-0.5">
        <div className="flex items-center gap-1 pr-[3px]">
          <div className="flex h-[21px] flex-1 items-center rounded-xs bg-[#cbcbcb]">
            <input
              aria-label="Find references"
              placeholder="Enter function or event name to find references..."
              className="flex-1 bg-transparent pl-[5px] outline-none placeholder:text-[#858585]"
            />
            <Magnifier className="h-4 w-4" />
          </div>
          <button type="button" aria-label="Find in blueprints" className="flex h-5 w-6 items-center justify-center rounded-xs bg-linear-to-b from-[#e2e2e2] to-[#b4b4b4]">
            <Svg box="0 0 14 14" className="h-3.5 w-3.5">
              <path d="M3 .5h3v2l.6 1h.8l.6-1v-2h3v2L13.500 10v3.500H8.500V7H5.500v6.500H.5V10L3 2.500Z" fill="#0a0a0a" />
            </Svg>
          </button>
        </div>
        <div className="mt-1 h-[35px] border-x border-t border-black bg-linear-to-b from-[#1f1f1f] to-[#171717]" />
      </div>
    </section>
  );
}

/* ---------- page ---------- */

const menus = ["File", "Edit", "Asset", "View", "Debug", "Window", "Help"];

export default function App() {
  return (
    <div
      className="flex h-screen flex-col overflow-hidden bg-[#222222] text-[12px] leading-4 text-[#cfcfcf]"
      style={{ fontFamily: "Roboto, sans-serif" }}
    >
      <Gradients />
      <nav className="flex h-[18px] shrink-0 items-center gap-5 border-b border-black bg-linear-to-b from-[#262626] to-[#121212] pl-1.5 text-[#e0e0e0]">
        {menus.map((m) => (
          <button key={m} type="button">
            {m}
          </button>
        ))}
      </nav>
      <div className="flex min-h-0 flex-1">
        <aside className="flex w-60 shrink-0 flex-col">
          <ComponentsPanel />
          <BlueprintPanel />
        </aside>
        <main className="ml-[5px] flex min-w-0 flex-1 flex-col">
          <Toolbar />
          <div className="flex gap-px pt-[5px] pl-1">
            <Tab icon={<ViewportIcon className="h-[15px] w-[15px]" />} label="Viewport" />
            <Tab icon={<FunctionIcon className="h-4 w-3.5" />} label="Construction Scrip" />
            <Tab icon={<ClockIcon className="h-[15px] w-[15px]" />} label="DeathSpin_Templa" />
            <Tab icon={<GraphIcon className="h-[13px] w-4" />} label="Event Graph" active accent />
          </div>
          <div className="flex flex-1 flex-col bg-[#3e3e3e] py-0.5 pr-[3px] pl-0.5">
            <Graph />
          </div>
          <FindPanel />
        </main>
      </div>
    </div>
  );
}
